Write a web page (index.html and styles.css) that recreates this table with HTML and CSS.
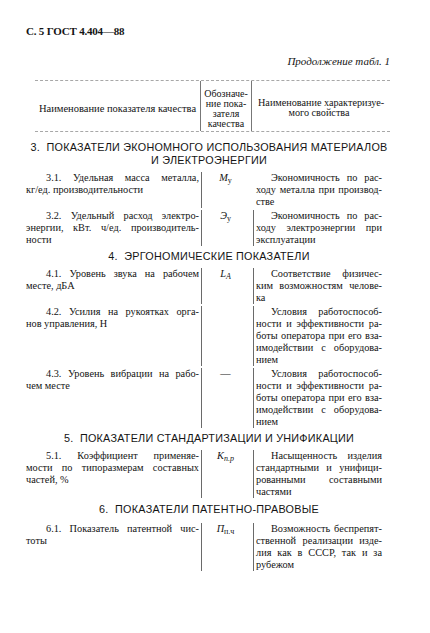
FILE: index.html
```html
<!DOCTYPE html>
<html lang="ru">
<head>
<meta charset="utf-8">
<title>ГОСТ 4.404—88</title>
<link rel="stylesheet" href="styles.css">
</head>
<body>
<div class="page">
  <div class="doc-title">С. 5 ГОСТ 4.404—88</div>
  <div class="cont">Продолжение табл. 1</div>

  <div class="thead">
    <div class="th h1">Наименование показателя качества</div>
    <div class="th h2">Обозначе-<br>ние пока-<br>зателя<br>качества</div>
    <div class="th h3">Наименование характеризуе-<br>мого свойства</div>
  </div>

  <div class="sect s3">3.&nbsp; ПОКАЗАТЕЛИ ЭКОНОМНОГО ИСПОЛЬЗОВАНИЯ МАТЕРИАЛОВ<br>И ЭЛЕКТРОЭНЕРГИИ</div>

  <div class="row">
    <div class="c1"><span class="ln j in1">3.1. Удельная масса металла,</span><span class="ln">кг/ед. производительности</span></div>
    <div class="c2"><span class="sym"><i>M</i><sub>у</sub></span></div>
    <div class="c3 nob"><span class="ln j in3">Экономичность по рас-</span><span class="ln j">ходу металла при производ-</span><span class="ln">стве</span></div>
  </div>

  <div class="row">
    <div class="c1"><span class="ln j in1">3.2. Удельный расход электро-</span><span class="ln j">энергии, кВт. ч/ед. производитель-</span><span class="ln">ности</span></div>
    <div class="c2"><span class="sym"><i>Э</i><sub>у</sub></span></div>
    <div class="c3"><span class="ln j in3">Экономичность по рас-</span><span class="ln j">ходу электроэнергии при</span><span class="ln">эксплуатации</span></div>
  </div>

  <div class="sect s4">4.&nbsp; ЭРГОНОМИЧЕСКИЕ ПОКАЗАТЕЛИ</div>

  <div class="row">
    <div class="c1"><span class="ln j in1">4.1. Уровень звука на рабочем</span><span class="ln">месте, дБА</span></div>
    <div class="c2"><span class="sym"><i>L<sub>A</sub></i></span></div>
    <div class="c3"><span class="ln j in3">Соответствие физичес-</span><span class="ln j">ким возможностям челове-</span><span class="ln">ка</span></div>
  </div>

  <div class="row">
    <div class="c1"><span class="ln j in1">4.2. Усилия на рукоятках орга-</span><span class="ln">нов управления, Н</span></div>
    <div class="c2"></div>
    <div class="c3"><span class="ln j in3">Условия работоспособ-</span><span class="ln j">ности и эффективности ра-</span><span class="ln j">боты оператора при его вза-</span><span class="ln j">имодействии с оборудова-</span><span class="ln">нием</span></div>
  </div>

  <div class="row">
    <div class="c1"><span class="ln j in1">4.3. Уровень вибрации на рабо-</span><span class="ln">чем месте</span></div>
    <div class="c2"><span class="sym">—</span></div>
    <div class="c3"><span class="ln j in3">Условия работоспособ-</span><span class="ln j">ности и эффективности ра-</span><span class="ln j">боты оператора при его вза-</span><span class="ln j">имодействии с оборудова-</span><span class="ln">нием</span></div>
  </div>

  <div class="sect s5">5.&nbsp; ПОКАЗАТЕЛИ СТАНДАРТИЗАЦИИ И УНИФИКАЦИИ</div>

  <div class="row">
    <div class="c1"><span class="ln j in1">5.1. Коэффициент применяе-</span><span class="ln j">мости по типоразмерам составных</span><span class="ln">частей, %</span></div>
    <div class="c2"><span class="sym"><i>K</i><sub><i>п.р</i></sub></span></div>
    <div class="c3"><span class="ln j in3">Насыщенность изделия</span><span class="ln j">стандартными и унифици-</span><span class="ln j">рованными составными</span><span class="ln">частями</span></div>
  </div>

  <div class="sect s6">6.&nbsp; ПОКАЗАТЕЛИ ПАТЕНТНО-ПРАВОВЫЕ</div>

  <div class="row">
    <div class="c1"><span class="ln j in1">6.1. Показатель патентной чис-</span><span class="ln">тоты</span></div>
    <div class="c2"><span class="sym"><i>П</i><sub>п.ч</sub></span></div>
    <div class="c3"><span class="ln j in3">Возможность беспрепят-</span><span class="ln j">ственной реализации изде-</span><span class="ln j">лия как в СССР, так и за</span><span class="ln">рубежом</span></div>
  </div>
</div>
</body>
</html>
```
FILE: styles.css
```css
html, body {
  margin: 0;
  padding: 0;
  background: #ffffff;
}

body {
  font-family: "Liberation Serif", "Times New Roman", serif;
  color: #141414;
}

.page {
  width: 366px;
  margin-left: 26px;
  padding-top: 24px;
}

.doc-title {
  font-size: 11px;
  font-weight: bold;
  line-height: 14px;
  letter-spacing: -0.2px;
}

.cont {
  margin-top: 16px;
  text-align: right;
  padding-right: 2px;
  font-size: 11px;
  font-style: italic;
  line-height: 14px;
}

.thead {
  margin-top: 12px;
  margin-left: 9px;
  margin-right: 2px;
  display: grid;
  grid-template-columns: 165px 52px 130px;
  border-top: 1px dashed #a8a8a8;
  border-bottom: 1px dashed #a8a8a8;
  font-size: 10.5px;
  line-height: 10px;
  text-align: center;
}

.th {
  padding: 0 2px;
}

.h1 {
  align-self: center;
  padding-top: 6px;
}

.h2 {
  padding-top: 8px;
  padding-bottom: 2px;
  border-left: 1px solid #777;
  border-right: 1px solid #777;
  font-size: 10px;
}

.h3 {
  align-self: center;
  padding-top: 4px;
  padding-left: 6px;
  white-space: nowrap;
  font-size: 10.2px;
}

.sect {
  margin-top: 2px;
  margin-bottom: 5px;
  text-align: center;
  font-family: "Liberation Sans", Arial, sans-serif;
  font-size: 10.8px;
  line-height: 13px;
  letter-spacing: 0.25px;
}

.sect.s3 {
  margin-top: 9px;
}

.sect.s4 {
  margin-top: 3.5px;
}

.sect.s5 {
  margin-top: 4px;
}

.sect.s6 {
  margin-top: 5px;
  margin-bottom: 7px;
}

.row {
  display: grid;
  grid-template-columns: 175px 52px 131px;
  font-size: 10.3px;
  line-height: 12px;
  margin-bottom: 2px;
}

.c1 {
  padding-right: 2px;
}

.c2 {
  border-left: 1px solid #6a6a6a;
  text-align: center;
}

.c3 {
  border-left: 1px solid #6a6a6a;
  padding-left: 2px;
  padding-right: 2px;
}

.c3.nob {
  border-left-color: transparent;
}

.ln {
  display: block;
  text-align: left;
}

.ln.j {
  text-align: justify;
  text-align-last: justify;
}

.in1 {
  text-indent: 20px;
}

.in3 {
  text-indent: 15px;
}

.sym {
  display: inline-block;
  padding-right: 4px;
}

.sym sub {
  font-size: 8px;
  line-height: 0;
  vertical-align: -2px;
}
```
